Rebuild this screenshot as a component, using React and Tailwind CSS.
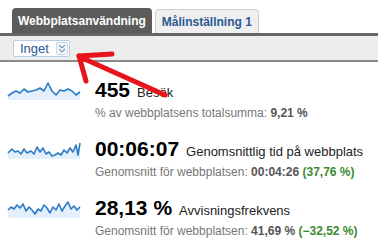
import React from 'react';

const rows = [
  {
    value: '455',
    label: 'Besök',
    pts: '1,14 5,11 9,9 13,11 17,7 21,10 25,9 29,8 33,6 37,9 41,1 45,9 49,13 53,8 57,9 61,7 65,9 69,13 73,10',
    sub: (
      <>
        % av webbplatsens totalsumma: <b className="text-[#555]">9,21 %</b>
      </>
    ),
  },
  {
    value: '00:06:07',
    label: 'Genomsnittlig tid på webbplats',
    pts: '1,12 5,8 8,11 11,10 14,13 17,8 20,12 24,10 27,13 30,6 33,11 36,7 39,13 42,11 45,15 48,14 51,12 54,14 57,9 60,12 63,7 66,11 69,4 71,14 73,2',
    sub: (
      <>
        Genomsnitt för webbplatsen: <b className="text-[#555]">00:04:26</b>{' '}
        <b className="text-[#3b8a2e]">(37,76 %)</b>
      </>
    ),
  },
  {
    value: '28,13 %',
    label: 'Avvisningsfrekvens',
    pts: '1,10 4,7 7,9 10,5 13,8 16,4 19,11 22,7 25,10 28,14 31,9 34,11 37,5 40,8 43,13 46,7 49,10 52,4 55,11 58,6 61,2 64,9 67,6 70,10 73,7',
    sub: (
      <>
        Genomsnitt för webbplatsen: <b className="text-[#555]">41,69 %</b>{' '}
        <b className="text-[#3b8a2e]">(−32,52 %)</b>
      </>
    ),
  },
];

const Spark = ({ pts }) => (
  <svg width="76" height="18" viewBox="0 0 76 18">
    <polygon points={`1,18 ${pts} 73,18`} fill="#e3f0fb" />
    <polyline points={pts} fill="none" stroke="#2b7bc4" strokeWidth="1.6" strokeLinejoin="round" />
  </svg>
);

export default function App() {
  return (
    <div className="relative w-[378px] h-[248px] overflow-hidden bg-white font-['Liberation_Sans',Arial,sans-serif]">
      {/* tabs */}
      <div className="flex items-end gap-[3px] pl-3 pt-2">
        <div className="h-[25px] rounded-t-[4px] bg-[#5c5c5c] px-[6px] flex items-center text-[12px] font-bold text-white">
          Webbplatsanvändning
        </div>
        <div className="h-[24px] rounded-t-[4px] border border-b-0 border-[#d0d0d0] bg-[#efefef] px-[6px] flex items-center text-[12px] font-bold text-[#2a5a93]">
          Målinställning 1
        </div>
      </div>
      <div className="h-[29px] border-t-[3px] border-b-2 border-t-[#666] border-b-[#8a8a8a] bg-[#ededed] flex items-center pl-[13px]">
        <div className="flex h-[17px] w-[57px] items-center justify-between rounded-[2px] border border-[#b8cde0] bg-white pl-[6px] pr-[1px]">
          <span className="text-[13px] leading-none text-[#2a5a93]">Inget</span>
          <span className="flex h-[13px] w-[12px] items-center justify-center rounded-[2px] border border-[#c9d6e4] bg-[#f4f7fb]">
            <svg width="8" height="9" viewBox="0 0 8 9">
              <polyline points="1,1 4,4 7,1" fill="none" stroke="#7a9cc0" strokeWidth="1.2" />
              <polyline points="1,5 4,8 7,5" fill="none" stroke="#7a9cc0" strokeWidth="1.2" />
            </svg>
          </span>
        </div>
      </div>

      {/* metric rows */}
      <div className="flex flex-col gap-[16px] pt-[16px]">
        {rows.map((r, i) => (
          <div key={i} className="flex items-start">
            <div className="w-[95px] pl-[7px] pt-[4px]">
              <Spark pts={r.pts} />
            </div>
            <div className="flex flex-col">
              <div className="flex items-baseline gap-[7px] leading-[24px]">
                <span className="text-[21px] font-bold text-black">{r.value}</span>
                <span className="text-[13px] text-[#222]">{r.label}</span>
              </div>
              <div className="text-[12px] leading-[16px] text-[#777]">{r.sub}</div>
            </div>
          </div>
        ))}
      </div>

      {/* red arrow annotation */}
      <svg className="absolute left-0 top-0" width="378" height="248" viewBox="0 0 378 248">
        <g stroke="#e8141b" strokeWidth="5" strokeLinecap="round" fill="none">
          <line x1="80" y1="57" x2="165" y2="95" />
          <line x1="79" y1="56" x2="112" y2="54" />
          <line x1="79" y1="56" x2="86" y2="81" />
        </g>
      </svg>
    </div>
  );
}
